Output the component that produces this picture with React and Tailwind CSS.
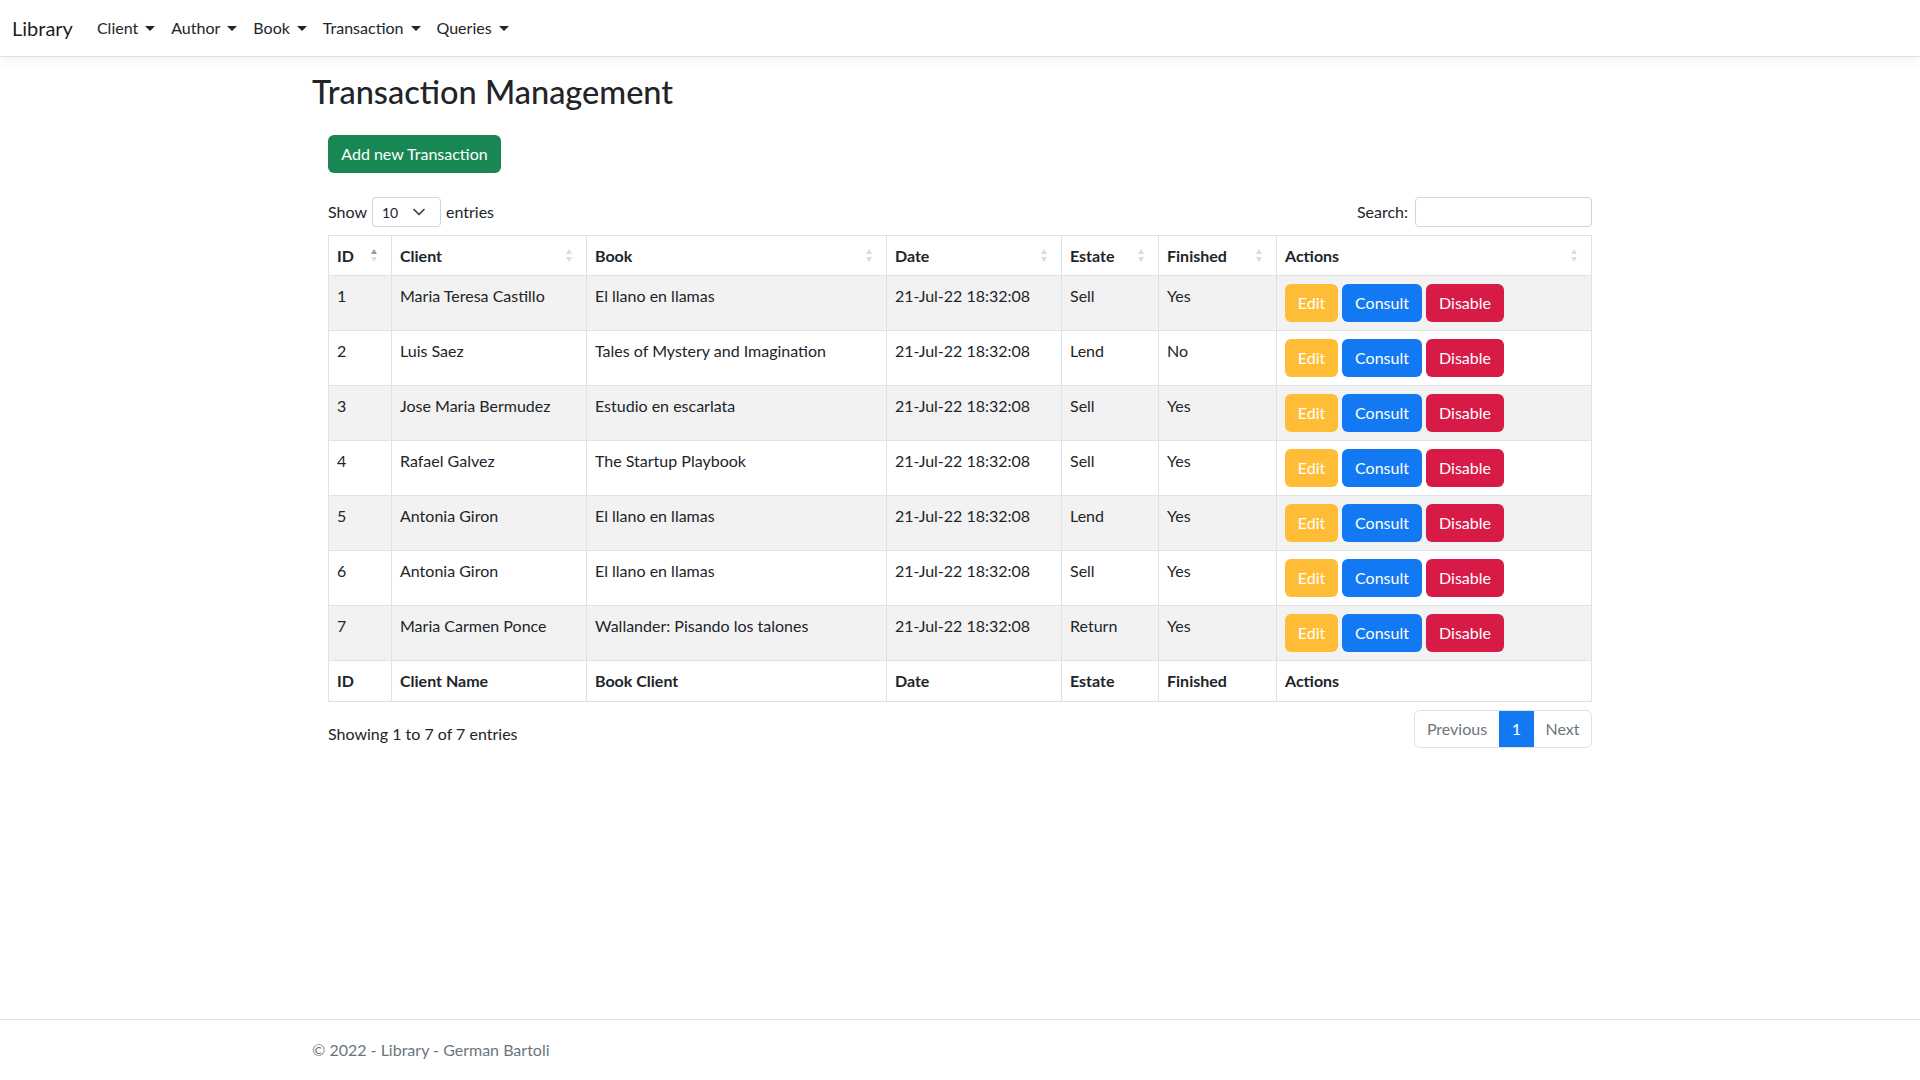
import React from "react";

const transactions = [
  { id: 1, client: "Maria Teresa Castillo", book: "El llano en llamas", estate: "Sell", finished: "Yes" },
  { id: 2, client: "Luis Saez", book: "Tales of Mystery and Imagination", estate: "Lend", finished: "No" },
  { id: 3, client: "Jose Maria Bermudez", book: "Estudio en escarlata", estate: "Sell", finished: "Yes" },
  { id: 4, client: "Rafael Galvez", book: "The Startup Playbook", estate: "Sell", finished: "Yes" },
  { id: 5, client: "Antonia Giron", book: "El llano en llamas", estate: "Lend", finished: "Yes" },
  { id: 6, client: "Antonia Giron", book: "El llano en llamas", estate: "Sell", finished: "Yes" },
  { id: 7, client: "Maria Carmen Ponce", book: "Wallander: Pisando los talones", estate: "Return", finished: "Yes" },
];

const columns = [
  { label: "ID", foot: "ID", width: "w-[63px]", active: true },
  { label: "Client", foot: "Client Name", width: "w-[195px]" },
  { label: "Book", foot: "Book Client", width: "w-[300px]" },
  { label: "Date", foot: "Date", width: "w-[175px]" },
  { label: "Estate", foot: "Estate", width: "w-[97px]" },
  { label: "Finished", foot: "Finished", width: "w-[118px]" },
  { label: "Actions", foot: "Actions", width: "" },
];

const Caret = () => (
  <span className="ml-[7px] inline-block align-[0.2em] border-x-[5px] border-t-[5px] border-b-0 border-x-transparent border-t-[#212529]" />
);

const SortArrows = ({ active }) => (
  <span className="flex flex-col gap-[3px]">
    <svg width="6" height="5" viewBox="0 0 6 5">
      <path d="M3 0 L6 5 L0 5 Z" fill={active ? "#9a9a9a" : "#dcdcdc"} />
    </svg>
    <svg width="6" height="5" viewBox="0 0 6 5">
      <path d="M0 0 L6 0 L3 5 Z" fill="#dcdcdc" />
    </svg>
  </span>
);

const NavItem = ({ label }) => (
  <a className="px-2 py-2 text-[16px] leading-6 text-[#212529] cursor-pointer">
    {label}
    <Caret />
  </a>
);

export default function App() {
  return (
    <div className="min-h-screen flex flex-col bg-white font-[Lato,sans-serif] text-[#212529]">
      <nav className="flex items-center h-[57px] px-3 border-b border-[#dee2e6] shadow-[0_4px_12px_rgba(0,0,0,0.05)]">
        <a className="text-[20px] leading-[30px] text-black/90 mr-4">Library</a>
        <NavItem label="Client" />
        <NavItem label="Author" />
        <NavItem label="Book" />
        <NavItem label="Transaction" />
        <NavItem label="Queries" />
      </nav>

      <main className="w-[1320px] mx-auto px-3 mt-4 pb-3">
        <h2 className="text-[32.5px] leading-[38px] font-medium mb-2">Transaction Management</h2>

        <div className="p-4">
          <button className="h-[38px] w-[173px] rounded-[6px] bg-[#198754] text-white text-[16px]">
            Add new Transaction
          </button>

          <div className="mt-6 flex items-center justify-between h-[30px]">
            <div className="flex items-center gap-[5px] text-[16px]">
              <span>Show</span>
              <div className="flex items-center justify-between w-[69px] h-[30px] pl-[9px] pr-[14px] border border-[#ced4da] rounded-[4px] text-[14px]">
                <span>10</span>
                <svg width="14" height="10" viewBox="0 0 16 12">
                  <path d="M2 3l6 6 6-6" fill="none" stroke="#343a40" strokeWidth="2" strokeLinecap="round" strokeLinejoin="round" />
                </svg>
              </div>
              <span>entries</span>
            </div>
            <div className="flex items-center gap-[7px] text-[16px]">
              <span>Search:</span>
              <input className="w-[177px] h-[30px] border border-[#ced4da] rounded-[4px] px-2 text-[14px] outline-none" />
            </div>
          </div>

          <table className="mt-2 w-full table-fixed border-collapse border border-[#dee2e6] text-[16px]">
            <thead>
              <tr>
                {columns.map((c) => (
                  <th key={c.label} className={`${c.width} border border-[#dee2e6] pl-2 pr-[14px] py-[7.5px] text-left font-bold leading-6`}>
                    <div className="flex items-center justify-between">
                      <span>{c.label}</span>
                      <SortArrows active={c.active} />
                    </div>
                  </th>
                ))}
              </tr>
            </thead>
            <tbody>
              {transactions.map((t, i) => (
                <tr key={t.id} className={i % 2 === 0 ? "bg-[#f2f2f2]" : "bg-white"}>
                  <td className="border border-[#dee2e6] p-2 align-top leading-6">{t.id}</td>
                  <td className="border border-[#dee2e6] p-2 align-top leading-6">{t.client}</td>
                  <td className="border border-[#dee2e6] p-2 align-top leading-6">{t.book}</td>
                  <td className="border border-[#dee2e6] p-2 align-top leading-6">21-Jul-22 18:32:08</td>
                  <td className="border border-[#dee2e6] p-2 align-top leading-6">{t.estate}</td>
                  <td className="border border-[#dee2e6] p-2 align-top leading-6">{t.finished}</td>
                  <td className="border border-[#dee2e6] p-2 align-top">
                    <div className="flex gap-1">
                      <button className="w-[53px] h-[38px] rounded-[6px] bg-[#ffbd37] text-white">Edit</button>
                      <button className="w-[80px] h-[38px] rounded-[6px] bg-[#1279f2] text-white">Consult</button>
                      <button className="w-[78px] h-[38px] rounded-[6px] bg-[#d81b46] text-white">Disable</button>
                    </div>
                  </td>
                </tr>
              ))}
            </tbody>
            <tfoot>
              <tr>
                {columns.map((c) => (
                  <th key={c.foot} className="border border-[#dee2e6] p-2 text-left font-bold leading-6">
                    {c.foot}
                  </th>
                ))}
              </tr>
            </tfoot>
          </table>

          <div className="mt-2 flex items-start justify-between">
            <div className="pt-[12px] text-[16px] leading-6">Showing 1 to 7 of 7 entries</div>
            <div className="flex h-[38px] border border-[#dee2e6] rounded-[6px] overflow-hidden text-[16px]">
              <span className="flex items-center w-[84px] justify-center text-[#6c757d]">Previous</span>
              <span className="flex items-center w-[35px] justify-center bg-[#1279f2] text-white">1</span>
              <span className="flex items-center w-[57px] justify-center text-[#6c757d]">Next</span>
            </div>
          </div>
        </div>
      </main>

      <footer className="mt-auto border-t border-[#dee2e6] h-[61px]">
        <div className="w-[1320px] mx-auto px-3 leading-[60px] text-[16px] text-[#6c757d]">
          © 2022 - Library - German Bartoli
        </div>
      </footer>
    </div>
  );
}
